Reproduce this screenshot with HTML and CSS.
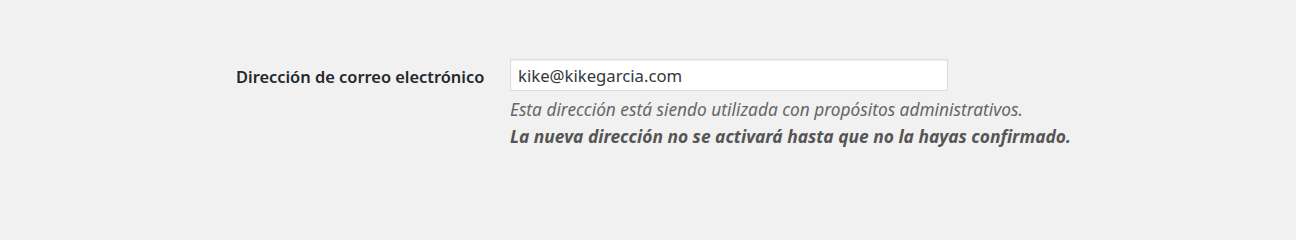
FILE: index.html
```html
<!DOCTYPE html>
<html lang="es">
<head>
<meta charset="utf-8">
<link rel="stylesheet" href="styles.css">
</head>
<body>
<div class="form-row">
  <label class="field-label" for="email">Dirección de correo electrónico</label>
  <div class="field">
    <input id="email" class="text-input" type="text" value="kike@kikegarcia.com">
    <p class="description">Esta dirección está siendo utilizada con propósitos administrativos.<br><strong>La nueva dirección no se activará hasta que no la hayas confirmado.</strong></p>
  </div>
</div>
</body>
</html>
```
FILE: styles.css
```css
html, body {
  margin: 0;
  padding: 0;
  background: #f1f1f1;
  height: 200px;
  overflow: hidden;
}
body {
  font-family: "Noto Sans", "Open Sans", sans-serif;
  color: #23282d;
}
.form-row {
  display: flex;
  padding: 59px 0 0 236px;
}
.field-label {
  width: 274px;
  font-size: 16.4px;
  font-weight: 600;
  color: #23282d;
  line-height: 22px;
  padding-top: 7px;
}
.field {
  display: flex;
  flex-direction: column;
}
.text-input {
  box-sizing: border-box;
  width: 438px;
  height: 32px;
  margin: 0;
  padding: 0 7px;
  border: 1px solid #ddd;
  box-shadow: inset 0 1px 2px rgba(0,0,0,0.07);
  background: #fff;
  font-family: inherit;
  font-size: 16.7px;
  color: #32373c;
  outline: none;
}
.description {
  margin: 5px 0 0;
  font-size: 17.3px;
  line-height: 27px;
  font-style: italic;
  color: #666;
}
.description strong {
  font-size: 17.4px;
  font-weight: 700;
  color: #555;
}
```
